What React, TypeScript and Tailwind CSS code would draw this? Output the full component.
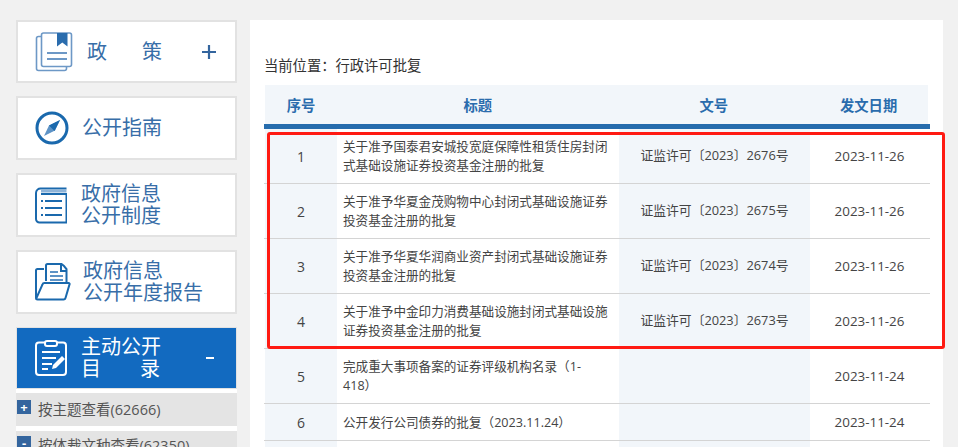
import React from "react";

const CJK = "font-['Open_Sans','Noto_Sans_CJK_SC',sans-serif]";

const rows = [
  { no: 1, title: "关于准予国泰君安城投宽庭保障性租赁住房封闭式基础设施证券投资基金注册的批复", doc: "证监许可〔2023〕2676号", date: "2023-11-26", h: "h-[55px]" },
  { no: 2, title: "关于准予华夏金茂购物中心封闭式基础设施证券投资基金注册的批复", doc: "证监许可〔2023〕2675号", date: "2023-11-26", h: "h-[55px]" },
  { no: 3, title: "关于准予华夏华润商业资产封闭式基础设施证券投资基金注册的批复", doc: "证监许可〔2023〕2674号", date: "2023-11-26", h: "h-[55px]" },
  { no: 4, title: "关于准予中金印力消费基础设施封闭式基础设施证券投资基金注册的批复", doc: "证监许可〔2023〕2673号", date: "2023-11-26", h: "h-[55px]" },
  { no: 5, title: "完成重大事项备案的证券评级机构名录（1-418）", doc: "", date: "2023-11-24", h: "h-[55px]" },
  { no: 6, title: "公开发行公司债券的批复（2023.11.24）", doc: "", date: "2023-11-24", h: "h-[37px]" },
  { no: 7, title: "", doc: "", date: "", h: "h-[37px]" },
];

function BookIcon() {
  return (
    <svg width="38" height="40" viewBox="0 0 38 40" fill="none" stroke="#6d98c6" strokeWidth="1.6">
      <path d="M6 4.500H3.500a2 2 0 0 0-2 2v30a2 2 0 0 0 2 2h26a2 2 0 0 0 2-2V35" />
      <rect x="6.500" y="1" width="30" height="33.500" rx="2" />
      <path d="M22 1h10.500v13.500l-5.200-4-5.300 4z" fill="#2a6cad" stroke="none" />
      <path d="M12 21h20M12 27h20" strokeWidth="2" />
    </svg>
  );
}

function CompassIcon() {
  return (
    <svg width="34" height="34" viewBox="0 0 34 34" fill="none">
      <circle cx="17" cy="17" r="15" stroke="#1a69ad" strokeWidth="3" />
      <path d="M25 9l-11 5.500L9 25l11-5.500z" fill="#5d93c6" />
      <path d="M25 9l-11 5.500 5.500 5.500z" fill="#1a69ad" />
    </svg>
  );
}

function ListBookIcon() {
  return (
    <svg width="32" height="37" viewBox="0 0 32 37" fill="none" stroke="#1a69ad">
      <path d="M31.500 1.500H6A4.500 4.500 0 0 0 1 6v26a3.500 3.500 0 0 0 3.500 3.500h27V7H6" strokeWidth="2" />
      <path d="M6 4h25.500" stroke="#8fb4d8" strokeWidth="3" />
      <path d="M10 14h17M10 21h17M10 28h17" strokeWidth="2" />
      <path d="M6 14h2M6 21h2M6 28h2" strokeWidth="2" />
    </svg>
  );
}

function FolderIcon() {
  return (
    <svg width="36" height="38" viewBox="0 0 36 38" fill="none" stroke="#1a69ad" strokeWidth="2">
      <path d="M9 6H2.500A1.500 1.500 0 0 0 1 7.500V35a1.500 1.500 0 0 0 1.500 1.500h26a2 2 0 0 0 2-1.500l4-13.500a1 1 0 0 0-1-1.500H9.500a2 2 0 0 0-2 1.500L1 36" />
      <path d="M11 18V2.500A1.500 1.500 0 0 1 12.500 1h14L29 3l2.500 3v13" />
      <path d="M26 1v7h6" />
      <path d="M15 9h8M15 13h13M15 17h13" strokeWidth="1.800" stroke="#5d93c6" />
    </svg>
  );
}

function ClipboardIcon() {
  return (
    <svg width="32" height="36" viewBox="0 0 32 36" fill="none" stroke="#ffffff" strokeWidth="2">
      <rect x="1" y="2.500" width="30" height="32.500" rx="3" />
      <rect x="10" y="1" width="12" height="5" rx="2" fill="#126ac0" />
      <path d="M7 12h18M7 18h14M7 24h10M7 29h6" />
      <path d="M17 29l1-4 9-9 3 3-9 9z" fill="#ffffff" stroke="none" />
    </svg>
  );
}

function SideBox({ icon, children, h, right }: { icon: React.ReactNode; children: React.ReactNode; h: string; right?: React.ReactNode }) {
  return (
    <div className={`flex ${h} shrink-0 items-center border-2 border-[#e2e2e2] bg-white pl-[17px]`}>
      <div className="flex w-[40px] justify-start">{icon}</div>
      <div className="flex-1 text-[20px] leading-[22px] text-[#386ea8]">{children}</div>
      {right}
    </div>
  );
}

export default function App() {
  return (
    <div className={`relative flex h-[447px] w-[958px] gap-[13px] overflow-hidden bg-[#f1f1f1] pt-[20px] pl-4 ${CJK}`}>
      <aside className="flex w-[221px] shrink-0 flex-col gap-[13px]">
        <SideBox
          h="h-[63px]"
          icon={<BookIcon />}
          right={
            <svg className="mr-[19px]" width="14" height="14" viewBox="0 0 14 14" stroke="#34659e" strokeWidth="2.200">
              <path d="M0 7h14M7 0v14" />
            </svg>
          }
        >
          <div className="ml-[12px] flex w-[75px] justify-between">
            <span>政</span>
            <span>策</span>
          </div>
        </SideBox>
        <SideBox h="h-[64px]" icon={<CompassIcon />}>
          <div className="ml-[7px]">公开指南</div>
        </SideBox>
        <SideBox h="h-[64px]" icon={<ListBookIcon />}>
          <div className="ml-[6px]">政府信息<br />公开制度</div>
        </SideBox>
        <SideBox h="h-[64px]" icon={<FolderIcon />}>
          <div className="ml-[8px]">政府信息<br />公开年度报告</div>
        </SideBox>
        <div className="flex shrink-0 flex-col bg-white">
          <div className="flex h-[62px] items-center border border-[#e2e2e2] bg-[#126ac0] pl-[18px] text-[20px] leading-[22px] text-white">
            <div className="flex w-[40px] justify-start"><ClipboardIcon /></div>
            <div className="ml-[6px] flex-1">
              <div>主动公开</div>
              <div className="flex w-[79px] justify-between"><span>目</span><span>录</span></div>
            </div>
            <span className="mr-[22px] h-[2px] w-[8px] bg-white" />
          </div>
          <div className="mt-[4px] flex h-[33px] items-start bg-[#e4e4e4] pl-px">
            <span className="mt-[7px] flex h-[14px] w-[14px] items-center justify-center bg-[#34659e] text-[13px] leading-none font-bold text-white">+</span>
            <span className="ml-[7px] text-[14.500px] leading-[34px] text-[#555555]">按主题查看(62666)</span>
          </div>
          <div className="mt-[5px] flex h-[33px] items-start bg-[#e4e4e4] pl-px">
            <span className="mt-[5px] flex h-[14px] w-[14px] items-center justify-center bg-[#34659e] text-[13px] leading-none font-bold text-white">-</span>
            <span className="ml-[7px] text-[14.500px] leading-[30px] text-[#555555]">按体裁文种查看(62350)</span>
          </div>
        </div>
      </aside>

      <main className="w-[693px] bg-white px-[14px] pt-[36px]">
        <div className="h-[29px] text-[14.300px] leading-[20px] text-[#333333]">当前位置：行政许可批复</div>
        <div className="mx-px flex h-[39px] bg-[#f2f6fa] text-center text-[14.300px] leading-[41px] font-bold text-[#2a6cad]">
          <div className="w-[72px]">序号</div>
          <div className="w-[282px]">标题</div>
          <div className="w-[191px]">文号</div>
          <div className="w-[119px]">发文日期</div>
        </div>
        <div className="h-[5px] w-[666px] bg-[#266cad]" />
        <div className="w-[666px] text-[#444444]">
          {rows.map((r) => (
            <div key={r.no} className={`flex ${r.h} items-stretch border-b border-[#d4d4d4] pl-px`}>
              <div className="flex w-[72px] items-center justify-center bg-[#f2f6fa] text-[14px]">{r.no}</div>
              <div className={`flex w-[282px] items-center px-[6px] text-[12.600px] leading-[19px] ${r.no === 5 ? "pr-[30px]" : ""}`}>{r.title}</div>
              <div className="flex w-[191px] items-center justify-center bg-[#f2f6fa] text-[12.800px]">{r.doc}</div>
              <div className="flex w-[119px] items-center justify-center text-[13.400px]">{r.date}</div>
            </div>
          ))}
        </div>
      </main>

      <div className="pointer-events-none absolute top-[132px] left-[267px] h-[217px] w-[678px] rounded-[3px] border-[3px] border-[#ff1a12]" />
    </div>
  );
}
